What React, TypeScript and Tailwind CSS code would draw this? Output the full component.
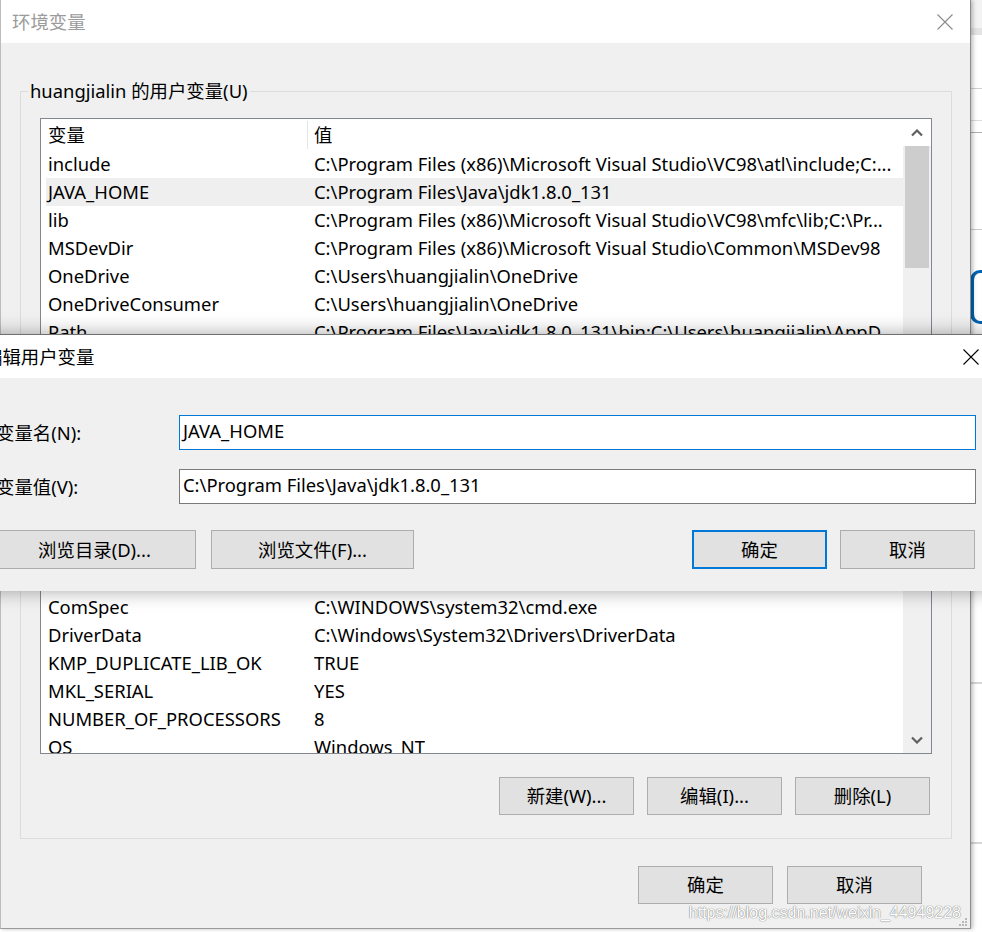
import React from 'react';

type Row = { name: string; value: string; selected?: boolean };

const topRows: Row[] = [
  { name: 'include', value: 'C:\\Program Files (x86)\\Microsoft Visual Studio\\VC98\\atl\\include;C:...' },
  { name: 'JAVA_HOME', value: 'C:\\Program Files\\Java\\jdk1.8.0_131', selected: true },
  { name: 'lib', value: 'C:\\Program Files (x86)\\Microsoft Visual Studio\\VC98\\mfc\\lib;C:\\Pr...' },
  { name: 'MSDevDir', value: 'C:\\Program Files (x86)\\Microsoft Visual Studio\\Common\\MSDev98' },
  { name: 'OneDrive', value: 'C:\\Users\\huangjialin\\OneDrive' },
  { name: 'OneDriveConsumer', value: 'C:\\Users\\huangjialin\\OneDrive' },
  { name: 'Path', value: 'C:\\Program Files\\Java\\jdk1.8.0_131\\bin;C:\\Users\\huangjialin\\AppD...' },
];

const bottomRows: Row[] = [
  { name: 'ComSpec', value: 'C:\\WINDOWS\\system32\\cmd.exe' },
  { name: 'DriverData', value: 'C:\\Windows\\System32\\Drivers\\DriverData' },
  { name: 'KMP_DUPLICATE_LIB_OK', value: 'TRUE' },
  { name: 'MKL_SERIAL', value: 'YES' },
  { name: 'NUMBER_OF_PROCESSORS', value: '8' },
  { name: 'OS', value: 'Windows_NT' },
];

function CloseX({ color }: { color: string }) {
  return (
    <svg width="16" height="16" viewBox="0 0 16 16">
      <path d="M0.5 0.5L15.5 15.5M15.5 0.5L0.5 15.5" stroke={color} strokeWidth="1.1" fill="none" />
    </svg>
  );
}

function Chevron({ down }: { down?: boolean }) {
  return (
    <svg width="12" height="8" viewBox="0 0 12 8">
      <path d={down ? 'M1 1.5L6 6.5L11 1.5' : 'M1 6.5L6 1.5L11 6.5'} stroke="#606060" strokeWidth="2.2" fill="none" />
    </svg>
  );
}

function WinButton({ label, className = '', primary }: { label: string; className?: string; primary?: boolean }) {
  return (
    <div
      className={`flex items-center justify-center bg-[#e1e1e1] text-black ${
        primary ? 'border-2 border-[#0078d7]' : 'border border-[#adadad]'
      } ${className}`}
    >
      {label}
    </div>
  );
}

function ListRow({ row }: { row: Row }) {
  return (
    <div className={`ml-[5px] flex h-[28px] w-[857px] items-center pl-[2px] ${row.selected ? 'bg-[#efefef]' : ''}`}>
      <div className="w-[266px] shrink-0 whitespace-nowrap">{row.name}</div>
      <div className="whitespace-nowrap overflow-hidden">{row.value}</div>
    </div>
  );
}

function VariableList() {
  return (
    <div className="flex h-[636px] w-[892px] overflow-hidden border border-[#828790] bg-white">
      <div className="w-[862px] shrink-0 overflow-hidden">
        <div className="flex h-[31px] items-center">
          <div className="w-[266px] shrink-0 pl-[7px]">变量</div>
          <div className="h-[28px] w-px bg-[#e5e5e5]" />
          <div className="pl-[6px]">值</div>
        </div>
        {topRows.map(r => (
          <ListRow key={r.name} row={r} />
        ))}
        <div className="h-[247px]" />
        {bottomRows.map(r => (
          <ListRow key={r.name} row={r} />
        ))}
      </div>
      <div className="flex w-[28px] flex-col bg-[#f0f0f0]">
        <div className="flex h-[27px] items-center justify-center bg-white">
          <Chevron />
        </div>
        <div className="mx-[2px] h-[122px] bg-[#cdcdcd]" />
        <div className="flex-1" />
        <div className="flex h-[27px] items-center justify-center">
          <Chevron down />
        </div>
      </div>
    </div>
  );
}

function BackgroundStrip() {
  return (
    <div className="absolute left-[971px] top-0 flex h-full w-[11px] flex-col bg-white">
      <div className="h-[28px] bg-[#f3f3f3]" />
      <div className="h-[7px] bg-[#e4e4e4]" />
      <div className="h-[53px]" />
      <div className="h-px bg-[#d0d0d0]" />
      <div className="h-[31px]" />
      <div className="h-px bg-[#dcdcdc]" />
      <div className="h-[11px]" />
      <div className="h-px bg-[#b0b0b0]" />
      <div className="h-[96px]" />
      <div className="h-px bg-[#cccccc]" />
      <div className="h-[40px]" />
      <div className="-ml-[1px] h-[54px] w-[16px] rounded-l-[10px] border-l-[4px] border-y-[3px] border-[#0063b1]" />
      <div className="h-[358px]" />
      <div className="h-[2px] bg-[#d6d6d6]" />
      <div className="h-[158px]" />
      <div className="h-[2px] bg-[#d6d6d6]" />
    </div>
  );
}

function EnvDialog() {
  return (
    <div className="absolute left-0 top-0 flex h-[929px] w-[971px] flex-col border-x border-b border-l-[#bdbdbd] border-r-[#8c8c8c] border-b-[#9a9a9a] shadow-[2px_0_4px_rgba(0,0,0,0.25)]">
      <div className="flex h-[43px] shrink-0 items-center justify-between bg-white pl-[11px] pr-[17px]">
        <span className="text-[#9b9b9b]">环境变量</span>
        <CloseX color="#8a8a8a" />
      </div>
      <div className="flex-1 bg-[#f0f0f0] px-[19px] pt-[35px]">
        <fieldset className="w-[929px] border border-[#dcdcdc]">
          <legend className="ml-[7px] px-[2px] leading-[26px]">huangjialin 的用户变量(U)</legend>
          <div className="pl-[19px] pr-[19px] pt-[14px] pb-[23px]">
            <VariableList />
            <div className="mr-[2px] mt-[23px] flex justify-end gap-[13px]">
              <WinButton label="新建(W)..." className="h-[38px] w-[135px]" />
              <WinButton label="编辑(I)..." className="h-[38px] w-[135px]" />
              <WinButton label="删除(L)" className="h-[38px] w-[135px]" />
            </div>
          </div>
        </fieldset>
        <div className="mt-[27px] flex justify-end gap-[14px] pr-[29px]">
          <WinButton label="确定" className="h-[38px] w-[135px]" />
          <WinButton label="取消" className="h-[38px] w-[135px]" />
        </div>
      </div>
    </div>
  );
}

function EditDialog() {
  return (
    <div className="absolute left-[-28px] top-[334px] w-[1024px] border-t border-[#6f6f6f] shadow-[0_0_18px_rgba(0,0,0,0.35)]">
      <div className="flex h-[43px] items-center justify-between bg-white pl-[12px] pr-[17px]">
        <span>编辑用户变量</span>
        <CloseX color="#000000" />
      </div>
      <div className="bg-[#f0f0f0] pb-[22px] pl-[21px] pr-[20px] pt-[37px]">
        <div className="flex h-[35px] items-center">
          <div className="flex-1 pl-[3px]">变量名(N):</div>
          <div className="flex h-[35px] w-[797px] items-center border border-[#0078d7] bg-white pb-[4px] pl-[3px]">JAVA_HOME</div>
        </div>
        <div className="mt-[19px] flex h-[35px] items-center">
          <div className="flex-1 pl-[3px]">变量值(V):</div>
          <div className="flex h-[35px] w-[797px] items-center border border-[#7a7a7a] bg-white pb-[4px] pl-[3px]">
            C:\Program Files\Java\jdk1.8.0_131
          </div>
        </div>
        <div className="mt-[26px] flex h-[39px] pr-[1px]">
          <WinButton label="浏览目录(D)..." className="w-[203px]" />
          <WinButton label="浏览文件(F)..." className="ml-[15px] w-[203px]" />
          <div className="flex-1" />
          <WinButton label="确定" className="w-[135px]" primary />
          <WinButton label="取消" className="ml-[13px] w-[135px]" />
        </div>
      </div>
    </div>
  );
}

function ResizeGrip() {
  return (
    <svg className="absolute left-[958px] top-[917px]" width="10" height="10" viewBox="0 0 10 10">
      {[
        [7, 1], [4, 4], [7, 4], [1, 7], [4, 7], [7, 7],
      ].map(([x, y]) => (
        <rect key={`${x}-${y}`} x={x} y={y} width="2" height="2" fill="#b8b8b8" />
      ))}
    </svg>
  );
}

export default function App() {
  return (
    <div className="relative h-[932px] w-[982px] overflow-hidden bg-white font-['Noto_Sans','Noto_Sans_CJK_SC',sans-serif] text-[18.4px] leading-[26px] text-black">
      <BackgroundStrip />
      <EnvDialog />
      <EditDialog />
      <ResizeGrip />
      <div className="absolute right-[21px] top-[900px] font-['Liberation_Sans',sans-serif] text-[16px] text-white [text-shadow:0_0_1px_#7c7c7c,0_0_1px_#7c7c7c]">
        https://blog.csdn.net/weixin_44949228
      </div>
    </div>
  );
}
